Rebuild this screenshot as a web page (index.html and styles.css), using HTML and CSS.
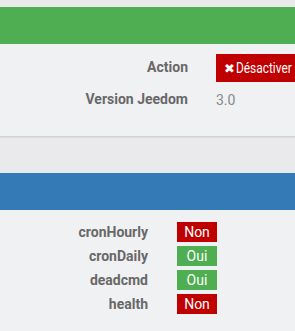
FILE: index.html
```html
<!DOCTYPE html>
<html lang="fr">
<head>
    <meta charset="UTF-8">
    <meta name="viewport" content="width=device-width, initial-scale=1.0">
    <title>Plugin</title>
    <link rel="stylesheet" href="styles.css">
</head>
<body>
    <section class="panel panel-success">
        <div class="panel-heading"></div>
        <div class="panel-body">
            <div class="form-row">
                <label class="control-label">Action</label>
                <div class="control">
                    <a class="btn btn-danger"><span class="icon">&#10006;</span><span class="btn-text">Désactiver</span></a>
                </div>
            </div>
            <div class="form-row">
                <label class="control-label">Version Jeedom</label>
                <div class="control value">3.0</div>
            </div>
        </div>
    </section>

    <section class="panel panel-primary">
        <div class="panel-heading"></div>
        <div class="panel-body">
            <div class="status-list">
                <span class="status-label">cronHourly</span>
                <span class="badge badge-no">Non</span>
                <span class="status-label">cronDaily</span>
                <span class="badge badge-yes">Oui</span>
                <span class="status-label">deadcmd</span>
                <span class="badge badge-yes">Oui</span>
                <span class="status-label">health</span>
                <span class="badge badge-no">Non</span>
            </div>
        </div>
    </section>
</body>
</html>
```

FILE: styles.css
```css
/* General */
body {
    font-family: Roboto, "Liberation Sans", Arial, sans-serif;
    font-size: 14px;
    margin: 0;
    padding: 7px 0 0 0;
    background-color: #eaeaed;
    color: #686868;
    overflow: hidden;
}

/* Panels */
.panel {
    background-color: #f0f1f3;
}

.panel-heading {
    height: 37px;
}

.panel-success .panel-heading {
    background-color: #4eae51;
}

.panel-primary {
    margin-top: 36px;
}

.panel-primary .panel-heading {
    background-color: #337ab7;
}

.panel-success .panel-body {
    padding: 10px 0 22px 0;
    border-bottom: 1px solid #d3d3d6;
    box-shadow: 0 1px 0 #dcdcdf;
}

.panel-primary .panel-body {
    padding: 12px 0 30px 0;
}

/* Form rows */
.form-row {
    display: grid;
    grid-template-columns: 188px 1fr;
    column-gap: 28px;
    align-items: center;
    height: 28px;
    margin-bottom: 4px;
}

.form-row:last-child {
    margin-bottom: 0;
}

.control-label {
    text-align: right;
    font-weight: bold;
    padding-bottom: 3px;
}

.control {
    white-space: nowrap;
}

.value {
    color: #888;
}

.btn {
    display: flex;
    align-items: center;
    width: 84px;
    height: 28px;
    padding: 0 0 0 8px;
    color: white;
    font-size: 14px;
    text-decoration: none;
    cursor: pointer;
}

.btn-danger {
    background-color: #c00000;
}

.btn .icon {
    font-family: "DejaVu Sans", sans-serif;
    font-size: 13px;
    font-weight: bold;
    width: 12px;
}

.btn-text {
    display: inline-block;
    transform: scaleX(0.85);
    transform-origin: left center;
}

/* Status list */
.status-list {
    display: grid;
    grid-template-columns: 148px 40px;
    column-gap: 29px;
    row-gap: 4px;
    align-items: center;
}

.status-label {
    text-align: right;
    font-weight: bold;
}

.badge {
    display: block;
    height: 20px;
    line-height: 20px;
    text-align: center;
    color: white;
    font-size: 14px;
}

.badge-no {
    background-color: #c00000;
}

.badge-yes {
    background-color: #4eae51;
}
```
